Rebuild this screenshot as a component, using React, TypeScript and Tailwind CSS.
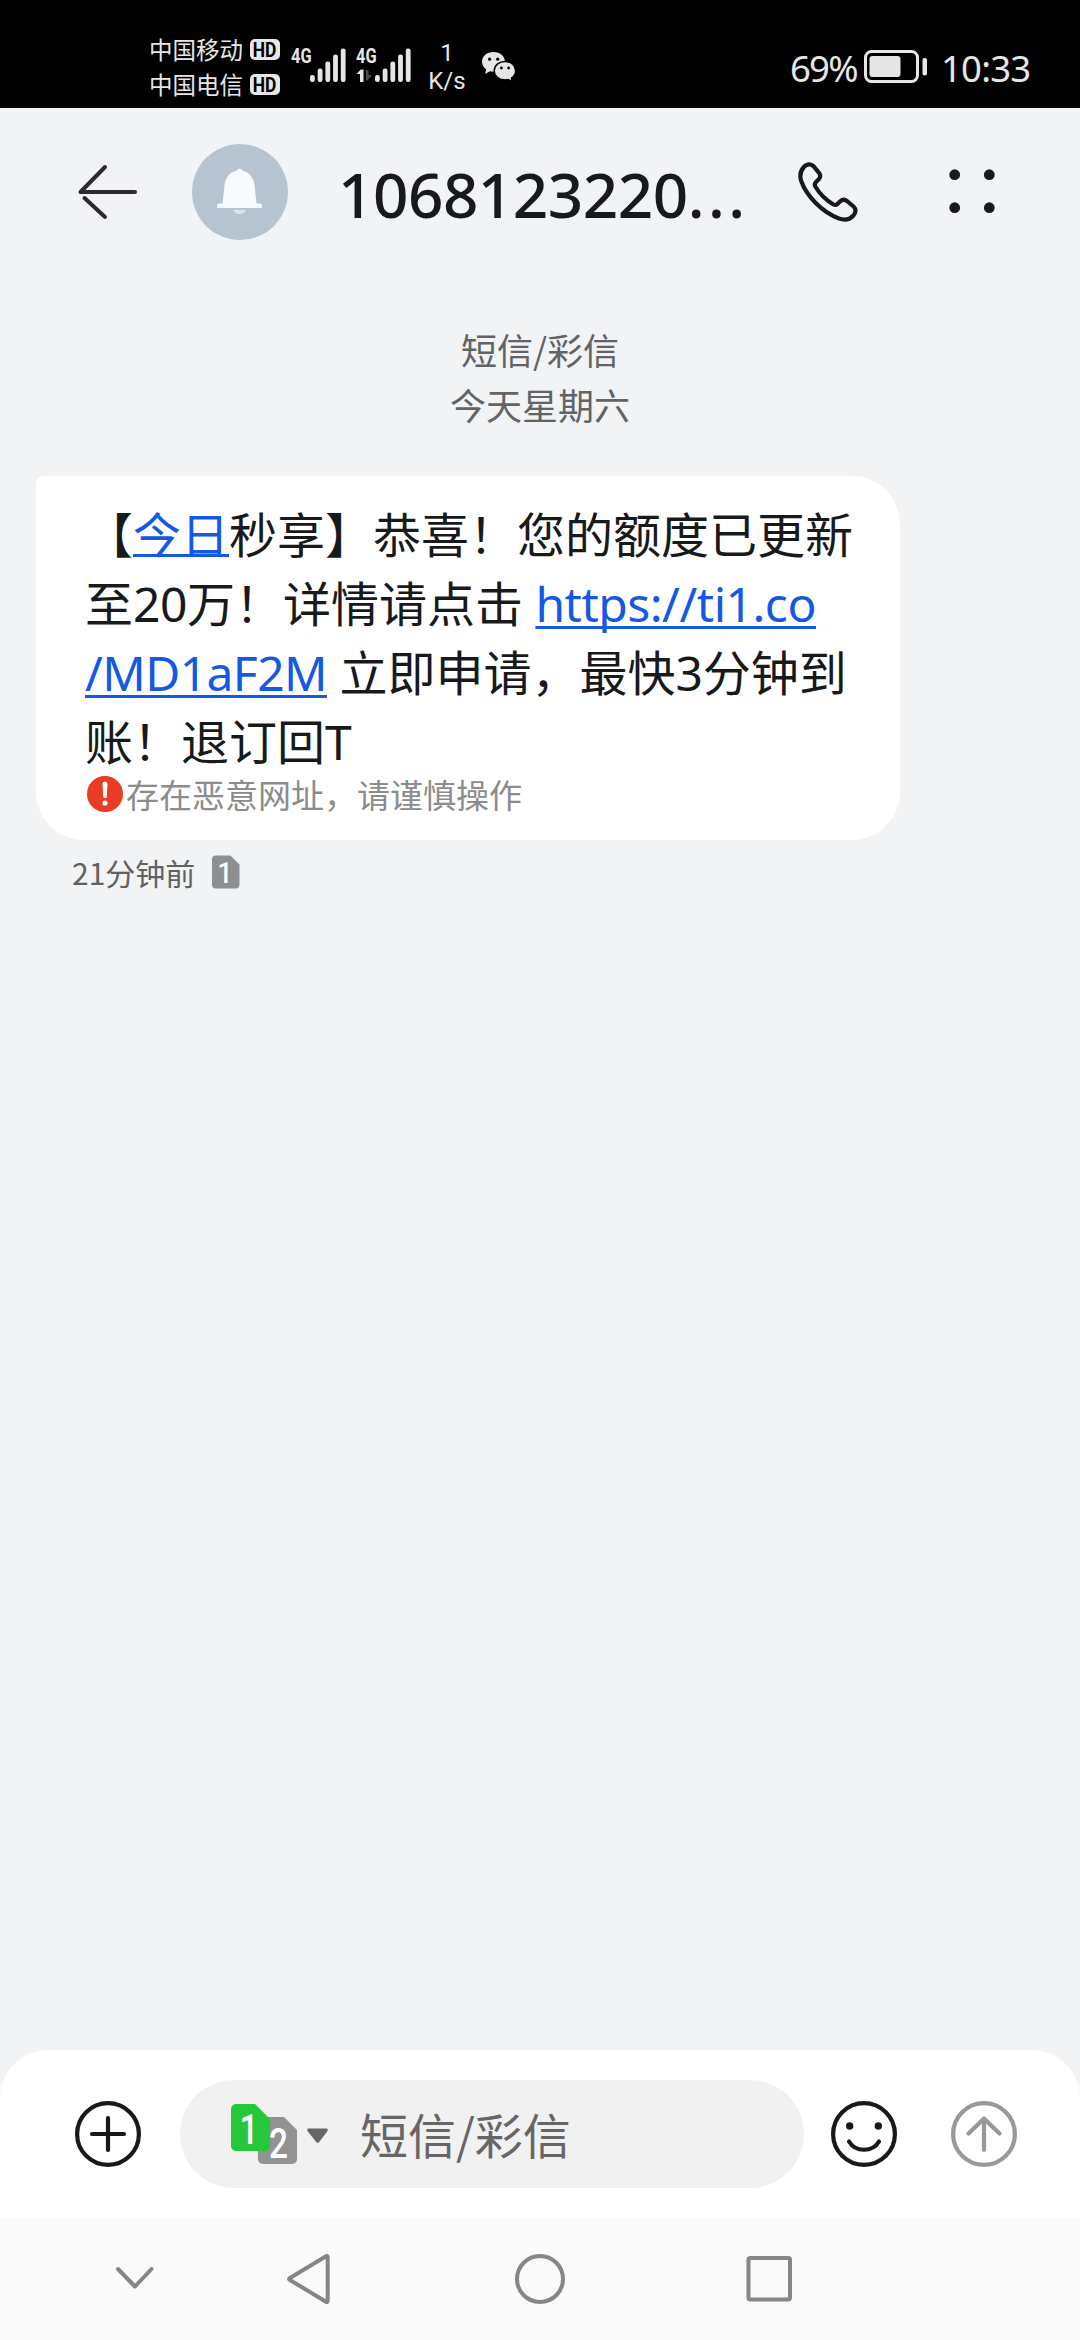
import React from "react";

function SignalBars() {
  return (
    <svg width="36" height="34" viewBox="0 0 36 34" fill="#e6e6e6">
      <rect x="0" y="27" width="4.8" height="7" rx="2.2" />
      <rect x="7.7" y="20.5" width="4.8" height="13.5" rx="2.2" />
      <rect x="15.4" y="13.5" width="4.8" height="20.5" rx="2.2" />
      <rect x="23.1" y="6.5" width="4.8" height="27.5" rx="2.2" />
      <rect x="30.8" y="0.5" width="4.8" height="33.5" rx="2.2" />
    </svg>
  );
}

function HdBadge() {
  return (
    <span className="flex h-[21px] w-[30px] items-center justify-center rounded-[5px] bg-[#e6e6e6] font-['Roboto',sans-serif] text-[20px] leading-none font-bold text-black">
      <span className="inline-block scale-x-[0.87]">HD</span>
    </span>
  );
}

function Network({ active }: { active?: boolean }) {
  return (
    <div className="flex h-[34px] w-[54px] justify-between">
      <div className="flex w-[19px] flex-col">
        <span className="h-[17px] w-[24px] origin-left scale-x-[0.78] font-['Roboto',sans-serif] text-[21px] leading-[17px] font-bold">4G</span>
        {active && (
          <svg className="mt-[4px]" width="18" height="13" viewBox="0 0 18 13">
            <path d="M4 13V5H0.500L4.800 0.500H7.500V13Z" fill="#e6e6e6" />
            <path d="M10 1H12.500V6H16L11 12L10 11Z" fill="#4a4a4a" />
          </svg>
        )}
      </div>
      <div className="flex">
        <SignalBars />
      </div>
    </div>
  );
}

function StatusBar() {
  return (
    <div className="flex h-[108px] items-start bg-black pl-[149px] text-[#e6e6e6]">
      <div className="flex w-[131px] flex-col pt-[32px] text-[23.5px] leading-[35px]">
        <div className="flex h-[35px] items-center justify-between whitespace-nowrap">
          <span>中国移动</span>
          <HdBadge />
        </div>
        <div className="flex h-[35px] items-center justify-between whitespace-nowrap">
          <span>中国电信</span>
          <HdBadge />
        </div>
      </div>
      <div className="mt-[48px] ml-[11px] flex gap-[11px]">
        <Network />
        <Network active />
      </div>
      <div className="mt-[39px] ml-[15px] flex w-[44px] flex-col items-center font-['Roboto',sans-serif] text-[24px] leading-[28px]">
        <span>1</span>
        <span>K/s</span>
      </div>
      <svg className="mt-[51px] ml-[12px]" width="36" height="31" viewBox="0 0 36 31">
        <path d="M12.5 1C6 1 1 5.200 1 10.700c0 3.200 1.700 5.900 4.300 7.700L4 23l5-2.700c1.100.3 2.300.4 3.500.4 6.500 0 11.500-4.300 11.500-9.900S19 1 12.500 1Z" fill="#e6e6e6" />
        <circle cx="8.600" cy="8.200" r="1.600" />
        <circle cx="16.700" cy="8.200" r="1.600" />
        <path d="M24 10.500c-6 0-10.800 4-10.800 9.200S18 29 24 29c1.200 0 2.300-.2 3.400-.5l4 2.300-1-3.700c2.600-1.700 4.200-4.300 4.200-7.400 0-5.200-4.600-9.200-10.600-9.200Z" fill="#e6e6e6" stroke="#000" strokeWidth="1.400" />
        <circle cx="20.400" cy="17" r="1.400" />
        <circle cx="27.600" cy="17" r="1.400" />
      </svg>
      <div className="mt-[46px] ml-auto flex h-[42px] items-center pr-[50px] font-['Noto_Sans',sans-serif] text-[36.5px] leading-[42px]">
        <span className="mt-[2px] w-[74px] tracking-[-1.8px]">69%</span>
        <svg width="64" height="34" viewBox="0 0 64 34">
          <rect x="1.500" y="1.500" width="52" height="30" rx="6" fill="none" stroke="#e6e6e6" strokeWidth="3" />
          <rect x="5.500" y="6" width="31" height="21" rx="3" fill="#e6e6e6" />
          <rect x="58.500" y="8" width="4.500" height="17.500" rx="2" fill="#e6e6e6" />
        </svg>
        <span className="mt-[2px] ml-[13px] w-[89px] tracking-[-0.8px]">10:33</span>
      </div>
    </div>
  );
}

function Header() {
  return (
    <header className="flex h-[168px] items-center pl-[76px] text-[#18191b]">
      <svg width="64" height="60" viewBox="0 0 64 60" fill="none" stroke="#2b2b2d" strokeWidth="4" strokeLinecap="round" strokeLinejoin="round">
        <path d="M29 5 4.500 30H59" />
        <path d="M8.500 36 29 55" />
      </svg>
      <svg className="ml-[52px]" width="96" height="96" viewBox="0 0 96 96">
        <circle cx="48" cy="48" r="48" fill="#b6c4d2" />
        <path d="M41 66a7 6.500 0 0 0 13 0Z" fill="#dbe5f2" />
        <path d="M44.500 26.500Q47.500 22.500 50.500 26.500Q61 29.500 62.500 41L64.500 59.500H68a2 2 0 0 1 2 2V64H25V61.500a2 2 0 0 1 2-2H30.500L32.500 41Q34 29.500 44.500 26.500Z" fill="#f8fafd" />
      </svg>
      <h1 className="mt-[4px] ml-[50px] w-[440px] font-['Noto_Sans',sans-serif] text-[62px] leading-[80px] font-medium tracking-[-0.5px] whitespace-nowrap">
        1068123220<span className="tracking-[3.500px]">...</span>
      </h1>
      <svg className="ml-[20px]" width="60" height="60" viewBox="0 0 60 60" fill="none" stroke="#18191b" strokeWidth="4.200" strokeLinejoin="round">
        <path d="M5.500 5.500C8.500 1.600 13 1.500 15.500 4.200L21 10.800C22.700 13 22.600 15 21 17L18 20C16.500 21.600 16.500 23 17.300 24.500C21.500 31.500 28.500 38.500 35.500 42.500C37 43.300 38.400 43 39.700 41.700L42.500 39C44.500 37.300 46.800 37.400 49 39L55.500 44.500C58.300 47 58.300 50.500 55 54C51.500 57.800 46.500 58.300 41 56.500C24 50 8.500 34 3.200 19C1.500 13.500 2 9.500 5.500 5.500Z" />
      </svg>
      <svg className="ml-[90px]" width="48" height="48" viewBox="0 0 48 48" fill="#18191b">
        <circle cx="6.700" cy="6.700" r="5.400" />
        <circle cx="41.300" cy="6.700" r="5.400" />
        <circle cx="6.700" cy="39.700" r="5.400" />
        <circle cx="41.300" cy="39.700" r="5.400" />
      </svg>
    </header>
  );
}

function SimBadge() {
  return (
    <svg width="28" height="34" viewBox="0 0 28 34">
      <path d="M4 .5H18.500L27.500 9.500V29.500a4 4 0 0 1-4 4H4a4 4 0 0 1-4-4V4.500a4 4 0 0 1 4-4Z" fill="#8e8f91" />
      <text x="13" y="28" textAnchor="middle" fontSize="29" fontWeight="500" fontFamily="Roboto" textLength="15" lengthAdjust="spacingAndGlyphs" fill="#fff">1</text>
    </svg>
  );
}

function Message() {
  return (
    <div className="px-[36px]">
      <div className="h-[364px] w-[864px] rounded-[48px] rounded-tl-[6px] bg-white pt-[24px] pl-[49px] text-[#18191b]">
        <div className="font-['Noto_Sans','Noto_Sans_CJK_SC',sans-serif] text-[48px] leading-[69px] whitespace-pre">
          <div className="-mt-[2px] mb-[2px] h-[69px] font-['Noto_Sans_CJK_SC',sans-serif]">
            【<a className="text-[#1459e3] underline decoration-[3px] underline-offset-[1px] [text-decoration-skip-ink:none]">今日</a>秒享】恭喜！您的额度已更新
          </div>
          <div className="h-[69px]">
            至<span className="tracking-[-0.5px]">20</span>万！详情请点击 <a className="tracking-[-0.5px] text-[#1459e3] underline decoration-[3px] underline-offset-[4px] [text-decoration-skip-ink:none]">https://ti1.co</a>
          </div>
          <div className="h-[69px]">
            <a className="tracking-[-0.6px] text-[#1459e3] underline decoration-[3px] underline-offset-[4px] [text-decoration-skip-ink:none]">/MD1aF2M</a> 立即申请，最快3分钟到
          </div>
          <div className="h-[69px]">账！退订回T</div>
        </div>
        <div className="flex h-[36px] items-center gap-[3px] text-[33px] leading-[36px] text-[#8c8c8c]">
          <svg className="ml-[2px]" width="36" height="36" viewBox="0 0 36 36">
            <circle cx="18" cy="18" r="18" fill="#ea3b25" />
            <path d="M15.500 8a2.500 2.500 0 0 1 5 0L19.800 20.500a1.800 1.800 0 0 1-3.600 0Z" fill="#fff" />
            <circle cx="18" cy="27" r="2.600" fill="#fff" />
          </svg>
          <span>存在恶意网址，请谨慎操作</span>
        </div>
      </div>
      <div className="mt-[13px] flex h-[38px] items-center pl-[36px] text-[30px] leading-[38px] text-[#606163]">
        <span className="w-[140px] whitespace-nowrap">21分钟前</span>
        <SimBadge />
      </div>
    </div>
  );
}

function SimSwitch() {
  return (
    <svg width="98" height="62" viewBox="0 0 98 62">
      <path d="M32 14H53L66 27V56a5 5 0 0 1-5 5H32a5 5 0 0 1-5-5V19a5 5 0 0 1 5-5Z" fill="#929292" />
      <path d="M5 1H24L39 16V43a5 5 0 0 1-5 5H5a5 5 0 0 1-5-5V6a5 5 0 0 1 5-5Z" fill="#27c73b" />
      <text x="18" y="40.500" textAnchor="middle" fontSize="42" fontWeight="500" fontFamily="Roboto" textLength="19" lengthAdjust="spacingAndGlyphs" fill="#fff">1</text>
      <text x="47.500" y="54.500" textAnchor="middle" fontSize="42" fontWeight="500" fontFamily="Roboto" textLength="19" lengthAdjust="spacingAndGlyphs" fill="#fff">2</text>
      <path d="M77.500 25.500H95.500q2 .5 1 2.500L88 39.300q-1.300 1-2.600 0L76.500 28q-1-2 1-2.500Z" fill="#666" />
    </svg>
  );
}

function Composer() {
  return (
    <div className="flex h-[168px] items-center rounded-t-[48px] bg-white pl-[75px]">
      <svg width="66" height="66" viewBox="0 0 66 66" fill="none" stroke="#18191b" strokeWidth="4.200" strokeLinecap="round">
        <circle cx="33" cy="33" r="30.900" />
        <path d="M33 17V49M17 33H49" />
      </svg>
      <div className="ml-[39px] flex h-[108px] w-[624px] items-center rounded-full bg-[#f1f1f1] pl-[51px]">
        <SimSwitch />
        <span className="-mt-[2px] ml-[31px] text-[48px] leading-[60px] text-[#666]">短信/彩信</span>
      </div>
      <svg className="ml-[27px]" width="66" height="66" viewBox="0 0 66 66" fill="none" stroke="#18191b" strokeWidth="4.200" strokeLinecap="round">
        <circle cx="33" cy="33" r="30.900" />
        <path d="M18 40.500C24.500 51.500 41.500 51.500 48 40.500" />
        <circle cx="18.700" cy="25" r="3.700" fill="#18191b" stroke="none" />
        <circle cx="47.300" cy="25" r="3.700" fill="#18191b" stroke="none" />
      </svg>
      <svg className="ml-[54px]" width="66" height="66" viewBox="0 0 66 66" fill="none" stroke="#999" strokeWidth="4.200" strokeLinecap="round" strokeLinejoin="round">
        <circle cx="33" cy="33" r="30.900" />
        <path d="M33 49V18M17.500 32.500 33 17.500 48.500 32.500" />
      </svg>
    </div>
  );
}

function NavBar() {
  return (
    <nav className="flex h-[122px] items-center bg-[#fafafa] pl-[114px]">
      <svg width="42" height="52" viewBox="0 0 42 52" fill="none" stroke="#868686" strokeWidth="4" strokeLinecap="round" strokeLinejoin="round">
        <path d="M4 16 21 33.500 37.500 16" />
      </svg>
      <svg className="ml-[129px]" width="48" height="52" viewBox="0 0 48 52" fill="none" stroke="#868686" strokeWidth="4" strokeLinejoin="round">
        <path d="M41 3.200 4.500 25.300Q3.500 26 4.500 26.700L41 48.800Q42.700 49.500 42.700 47.500V4.500Q42.700 2.500 41 3.200Z" />
      </svg>
      <svg className="ml-[181px]" width="52" height="52" viewBox="0 0 52 52" fill="none" stroke="#868686" strokeWidth="4">
        <circle cx="26" cy="26" r="23" />
      </svg>
      <svg className="ml-[178px]" width="50" height="52" viewBox="0 0 50 52" fill="none" stroke="#868686" strokeWidth="4">
        <rect x="4.500" y="5" width="41.500" height="41.500" rx="2" />
      </svg>
    </nav>
  );
}

export default function App() {
  return (
    <div className="flex h-[2340px] w-[1080px] flex-col overflow-hidden bg-[#f1f3f5] font-['Noto_Sans_CJK_SC',sans-serif]">
      <StatusBar />
      <Header />
      <div className="mt-[46px] mb-[44px] text-center text-[36px] leading-[55px] text-[#626365]">
        <div>短信/彩信</div>
        <div>今天星期六</div>
      </div>
      <Message />
      <div className="flex-1" />
      <Composer />
      <NavBar />
    </div>
  );
}
